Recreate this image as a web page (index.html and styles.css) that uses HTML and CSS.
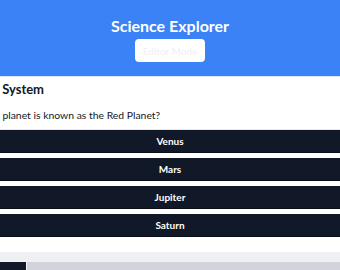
FILE: index.html
```html
<!DOCTYPE html>
<html lang="en">
<head>
<meta charset="utf-8">
<title>Science Explorer</title>
<link rel="stylesheet" href="styles.css">
</head>
<body>
  <header class="top">
    <h1 class="title">Science Explorer</h1>
    <button class="mode-btn">Editor Mode</button>
  </header>
  <main class="stage">
    <section class="quiz">
      <h2 class="topic">Solar System</h2>
      <p class="question">Which planet is known as the Red Planet?</p>
      <div class="options">
        <button class="option">Venus</button>
        <button class="option">Mars</button>
        <button class="option">Jupiter</button>
        <button class="option">Saturn</button>
      </div>
    </section>
  </main>
  <footer class="progress-wrap">
    <div class="progress-track"><div class="progress-fill"></div></div>
  </footer>
</body>
</html>
```
FILE: styles.css
```css
html, body {
  margin: 0;
  padding: 0;
}
body {
  width: 340px;
  height: 270px;
  overflow: hidden;
  background: #f3f4f6;
  font-family: "Lato", "Noto Sans", sans-serif;
  color: #111827;
}
.top {
  background: #3b82f6;
  height: 77px;
  box-sizing: border-box;
  padding-top: 16px;
  display: flex;
  flex-direction: column;
  align-items: center;
  border-bottom: 1px solid #dbe4f3;
}
.title {
  margin: 0;
  font-size: 16px;
  font-weight: 700;
  color: #ffffff;
  line-height: 20px;
}
.mode-btn {
  margin-top: 3px;
  width: 70px;
  height: 23px;
  border: none;
  border-radius: 4px;
  background: #ffffff;
  color: #edf0f5;
  font-family: inherit;
  font-size: 10px;
  padding: 0;
}
.stage {
  background: #ffffff;
  display: flex;
  justify-content: center;
  height: 175px;
}
.quiz {
  flex: 0 0 400px;
  width: 400px;
  padding-top: 2px;
}
.topic {
  margin: 0;
  font-size: 13px;
  font-weight: 700;
  line-height: 20px;
}
.question {
  margin: 8px 0 0;
  font-size: 10.4px;
  line-height: 16px;
  padding-bottom: 6px;
}
.options {
  display: flex;
  flex-direction: column;
  gap: 5px;
  border-top: 1px solid #e5e7eb;
}
.option {
  height: 23px;
  border: none;
  border-bottom: 1px solid #0b0f18;
  background: #111827;
  color: #ffffff;
  font-family: inherit;
  font-size: 10px;
  font-weight: 700;
  padding: 0;
}
.progress-wrap {
  padding-top: 10px;
  background: #eef0f3;
}
.progress-track {
  height: 8px;
  background: #d1d5db;
}
.progress-fill {
  width: 26px;
  height: 100%;
  background: #111827;
  border-right: 1px solid #f3f4f6;
}
```
